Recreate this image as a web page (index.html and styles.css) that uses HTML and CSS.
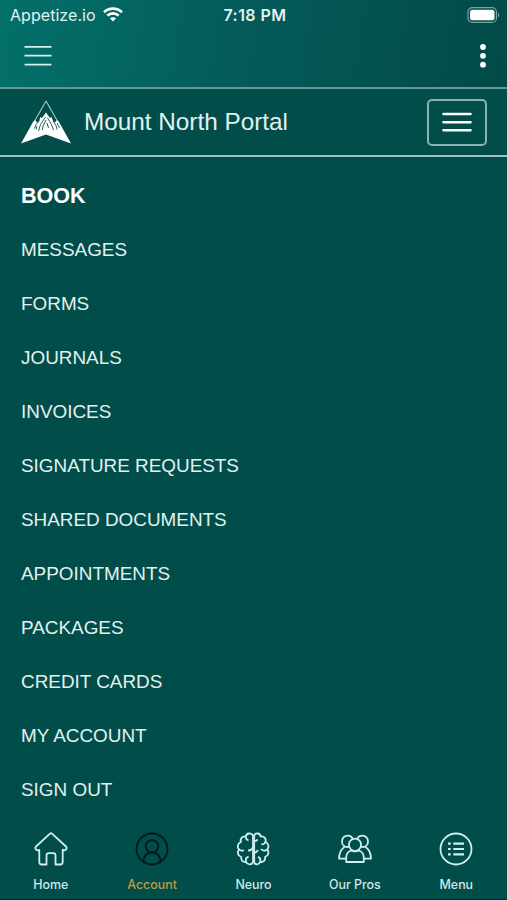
FILE: index.html
```html
<!DOCTYPE html>
<html lang="en">
<head>
    <meta charset="UTF-8">
    <meta name="viewport" content="width=device-width, initial-scale=1.0">
    <title>Mount North Portal</title>
    <link rel="stylesheet" href="styles.css">
</head>
<body>
    <header class="top">
        <div class="status">
            <div class="carrier">
                <span>Appetize.io</span>
                <svg width="20" height="15" viewBox="0 0 20 15" fill="none" stroke="#fff" stroke-width="2.6">
                    <path d="M1 5.2C6 .4 14 .4 19 5.2"/>
                    <path d="M4.3 8.6c3.2-3 8.2-3 11.4 0"/>
                    <path d="M10 14.5l-3.100-3.200c1.800-1.500 4.400-1.500 6.200 0z" fill="#fff" stroke="none"/>
                </svg>
            </div>
            <span class="time">7:18 PM</span>
            <svg class="battery" width="33" height="16" viewBox="0 0 33 16">
                <rect x="1" y=".6" width="28.5" height="14.8" rx="4.5" fill="none" stroke="#7ba5a3" stroke-width="1.2"/>
                <rect x="3" y="2.8" width="24.5" height="10.400" rx="2.5" fill="#fff"/>
                <path d="M31 5.800c1.800.8 1.800 3.600 0 4.400z" fill="#7ba5a3"/>
            </svg>
        </div>
        <div class="toolbar">
            <svg width="28" height="22" viewBox="0 0 28 22" stroke="#d5f0ec" stroke-width="1.7">
                <path d="M.5 1.800h27M.5 10.700h27M.5 19.700h27"/>
            </svg>
            <svg width="6" height="24" viewBox="0 0 6 24" fill="#fff">
                <circle cx="3" cy="3" r="2.9"/>
                <circle cx="3" cy="11.8" r="2.9"/>
                <circle cx="3" cy="20.7" r="2.9"/>
            </svg>
        </div>
    </header>

    <nav class="navbar">
        <svg class="logo" width="52" height="46" viewBox="0 0 52 46">
            <path d="M26 2L13.500 24M26 2l12.500 22" fill="none" stroke="#a9c4c2" stroke-width="1.1"/>
            <path d="M1 44.500L13 23l2-2 2 2.500 2-1.500 1.500-4 1.500 1L26 13.500l4 5.500 1.500-1 1.500 4 2 1.500 2-2.500 2 2L51 44.500 26 35.500z" fill="#fff"/>
            <path d="M25.500 18l-5 7.500-2 6.500M26 21l-3 6-.5 4M27.500 19l4 6.500 2 5.500M27 24l1.500 5M19.500 21.500l-3.500 4-1.500 4M17 27l-1 3.500M33 22l3 4.500 1 4M37 24l2.500 5" fill="none" stroke="#24625f" stroke-width="1"/>
        </svg>
        <span class="brand">Mount North Portal</span>
        <button class="toggler" aria-label="Toggle navigation">
            <svg width="30" height="20" viewBox="0 0 30 20" stroke="#fff" stroke-width="2.5" stroke-linecap="round">
                <path d="M1.500 2h27M1.500 10.200h27M1.500 18.300h27"/>
            </svg>
        </button>
    </nav>

    <ul class="links">
        <li class="book">BOOK</li>
        <li>MESSAGES</li>
        <li>FORMS</li>
        <li>JOURNALS</li>
        <li>INVOICES</li>
        <li>SIGNATURE REQUESTS</li>
        <li>SHARED DOCUMENTS</li>
        <li>APPOINTMENTS</li>
        <li>PACKAGES</li>
        <li>CREDIT CARDS</li>
        <li>MY ACCOUNT</li>
        <li>SIGN OUT</li>
    </ul>

    <footer class="tabs">
        <div class="tab">
            <svg viewBox="0 0 34 34">
                <path d="M16 1.700Q17 .8 18 1.700L32 14.500Q33.300 16 32 17.500 30.500 19 28.700 17.800V30Q28.700 32.500 26.200 32.500H21.500V23.500Q21.500 21.200 19.200 21.200H14.800Q12.500 21.200 12.500 23.500V32.500H7.800Q5.300 32.500 5.300 30V17.800Q3.500 19 2 17.500 .7 16 2 14.500z"/>
            </svg>
            <span>Home</span>
        </div>
        <div class="tab active">
            <svg viewBox="0 0 34 34">
                <circle cx="17" cy="17" r="15.5"/>
                <circle cx="17" cy="14.3" r="6.2"/>
                <path d="M8.500 29.500V28c.8-4.600 4-7.500 8.500-7.500s7.700 2.900 8.500 7.500v1.500"/>
            </svg>
            <span>Account</span>
        </div>
        <div class="tab">
            <svg viewBox="0 0 34 34">
                <path d="M17 3.500C15.500.5 10.500.8 9.700 4.500 6.200 4 3.700 7 5 10 1.500 11.300.8 15.300 3 17.500.8 20.500 2 24 5.300 25c-.8 3.300 1.700 5.500 4.800 5 1.200 3 5.600 3.200 6.900.4z"/>
                <path d="M18.200 3.500C19.500.5 24 .8 24.800 4.500 28.300 4 30.600 7 29.400 10c3.300 1.300 3.900 5.300 1.900 7.500 2.200 3 .9 6.500-2.300 7.500.8 3.300-1.700 5.500-4.800 5-1.200 3-4.900 3.200-6 .4z"/>
                <path d="M9.700 4.500c0 2 1 3.300 2.800 3.800M3 17.500c1.500 1.200 3.400 1.400 5 .7M10.100 30c-.7-2.700.4-4.700 2.500-5.300M17 14.500c-.4 2.600-2.300 4-5 4M29.400 10c-.7 1.700-2 2.500-4 2.400M31.300 17.500c-2 1.500-4.700 1.500-6.300-.5M24.200 30c.6-2.600-.3-4.500-2.200-5.200M18.200 9c1.500.2 2.800-.3 3.500-1.500M18.200 20.500c1.900 0 3.200-1 3.500-2.700"/>
            </svg>
            <span>Neuro</span>
        </div>
        <div class="tab">
            <svg viewBox="0 0 34 34">
                <circle cx="17" cy="12.7" r="6.1"/>
                <path d="M8.200 30V25c.3-4 3-6.400 6-6.400 1.800 1 3.800 1 5.600 0 3 0 5.700 2.400 6 6.400v5z"/>
                <path d="M11.200 14.700C7 16 3.600 12.900 4 9.300 4.300 3.500 11.500 1.600 14.700 6.500M22.800 14.700C27 16 30.400 12.900 30 9.300 29.700 3.500 22.500 1.600 19.300 6.500M6.500 14.900C3 17 1.200 20.500 1 26.700H8M27.500 14.900C31 17 32.800 20.500 33 26.700H26"/>
            </svg>
            <span>Our Pros</span>
        </div>
        <div class="tab">
            <svg viewBox="0 0 34 34">
                <circle cx="17" cy="17" r="15.5"/>
                <path d="M14.300 11.700H25M14.300 17H25M14.300 22.300H25M9 11.700h2.700M9 17h2.700M9 22.300h2.700" stroke-width="2.2"/>
            </svg>
            <span>Menu</span>
        </div>
    </footer>
</body>
</html>
```
FILE: styles.css
```css
* {
    box-sizing: border-box;
}
body {
    font-family: "Liberation Sans", Arial, sans-serif;
    margin: 0;
    height: 900px;
    overflow: hidden;
    background-color: #014d4a;
    color: #e2f1ef;
    display: flex;
    flex-direction: column;
}
svg {
    display: block;
}
.top, .navbar, .links, .tabs {
    flex-shrink: 0;
}
.top {
    height: 87px;
    background: linear-gradient(100deg, #03706a 0%, #045a59 50%, #014a48 100%);
}
.status {
    height: 30px;
    padding: 0 7px 1px 10px;
    display: grid;
    grid-template-columns: 1fr auto 1fr;
    align-items: center;
    font-family: Inter, sans-serif;
    font-size: 16px;
}
.carrier {
    display: flex;
    align-items: center;
    gap: 7px;
    letter-spacing: 0.05px;
}
.time {
    font-weight: 600;
    font-size: 16px;
    letter-spacing: 0.45px;
}
.battery {
    justify-self: end;
}
.toolbar {
    height: 52px;
    padding: 0 21px 0 24px;
    display: flex;
    justify-content: space-between;
    align-items: center;
}
.navbar {
    height: 70px;
    padding: 0 20px;
    border-top: 2px solid #629894;
    border-bottom: 2px solid #a4bfbe;
    display: flex;
    align-items: center;
}
.brand {
    margin-left: 12px;
    font-size: 24.3px;
    line-height: 30px;
}
.toggler {
    margin-left: auto;
    width: 60px;
    height: 47px;
    padding: 0;
    background: none;
    border: 2px solid #8eb2b0;
    border-radius: 5px;
    display: flex;
    align-items: center;
    justify-content: center;
}
.links {
    list-style: none;
    margin: 0;
    padding: 12px 21px 0;
    height: 659px;
}
.links li {
    height: 54px;
    line-height: 54px;
    font-size: 18.9px;
}
.links .book {
    font-size: 21.5px;
    font-weight: bold;
    color: #fff;
}
.tabs {
    height: 84px;
    display: grid;
    grid-template-columns: repeat(5, 1fr);
    border-bottom: 1px solid #02302f;
}
.tab {
    display: flex;
    flex-direction: column;
    align-items: center;
    padding-top: 16px;
    font-family: Inter, sans-serif;
    font-size: 12.4px;
    font-weight: 500;
    line-height: 16px;
    color: #d3e8e8;
}
.tab svg {
    width: 34px;
    height: 34px;
    margin-bottom: 11px;
    fill: none;
    stroke: #cfeeee;
    stroke-width: 1.8;
    stroke-linejoin: round;
}
.tab.active {
    color: #c09a45;
}
.tab.active svg {
    stroke: #021819;
}
```
